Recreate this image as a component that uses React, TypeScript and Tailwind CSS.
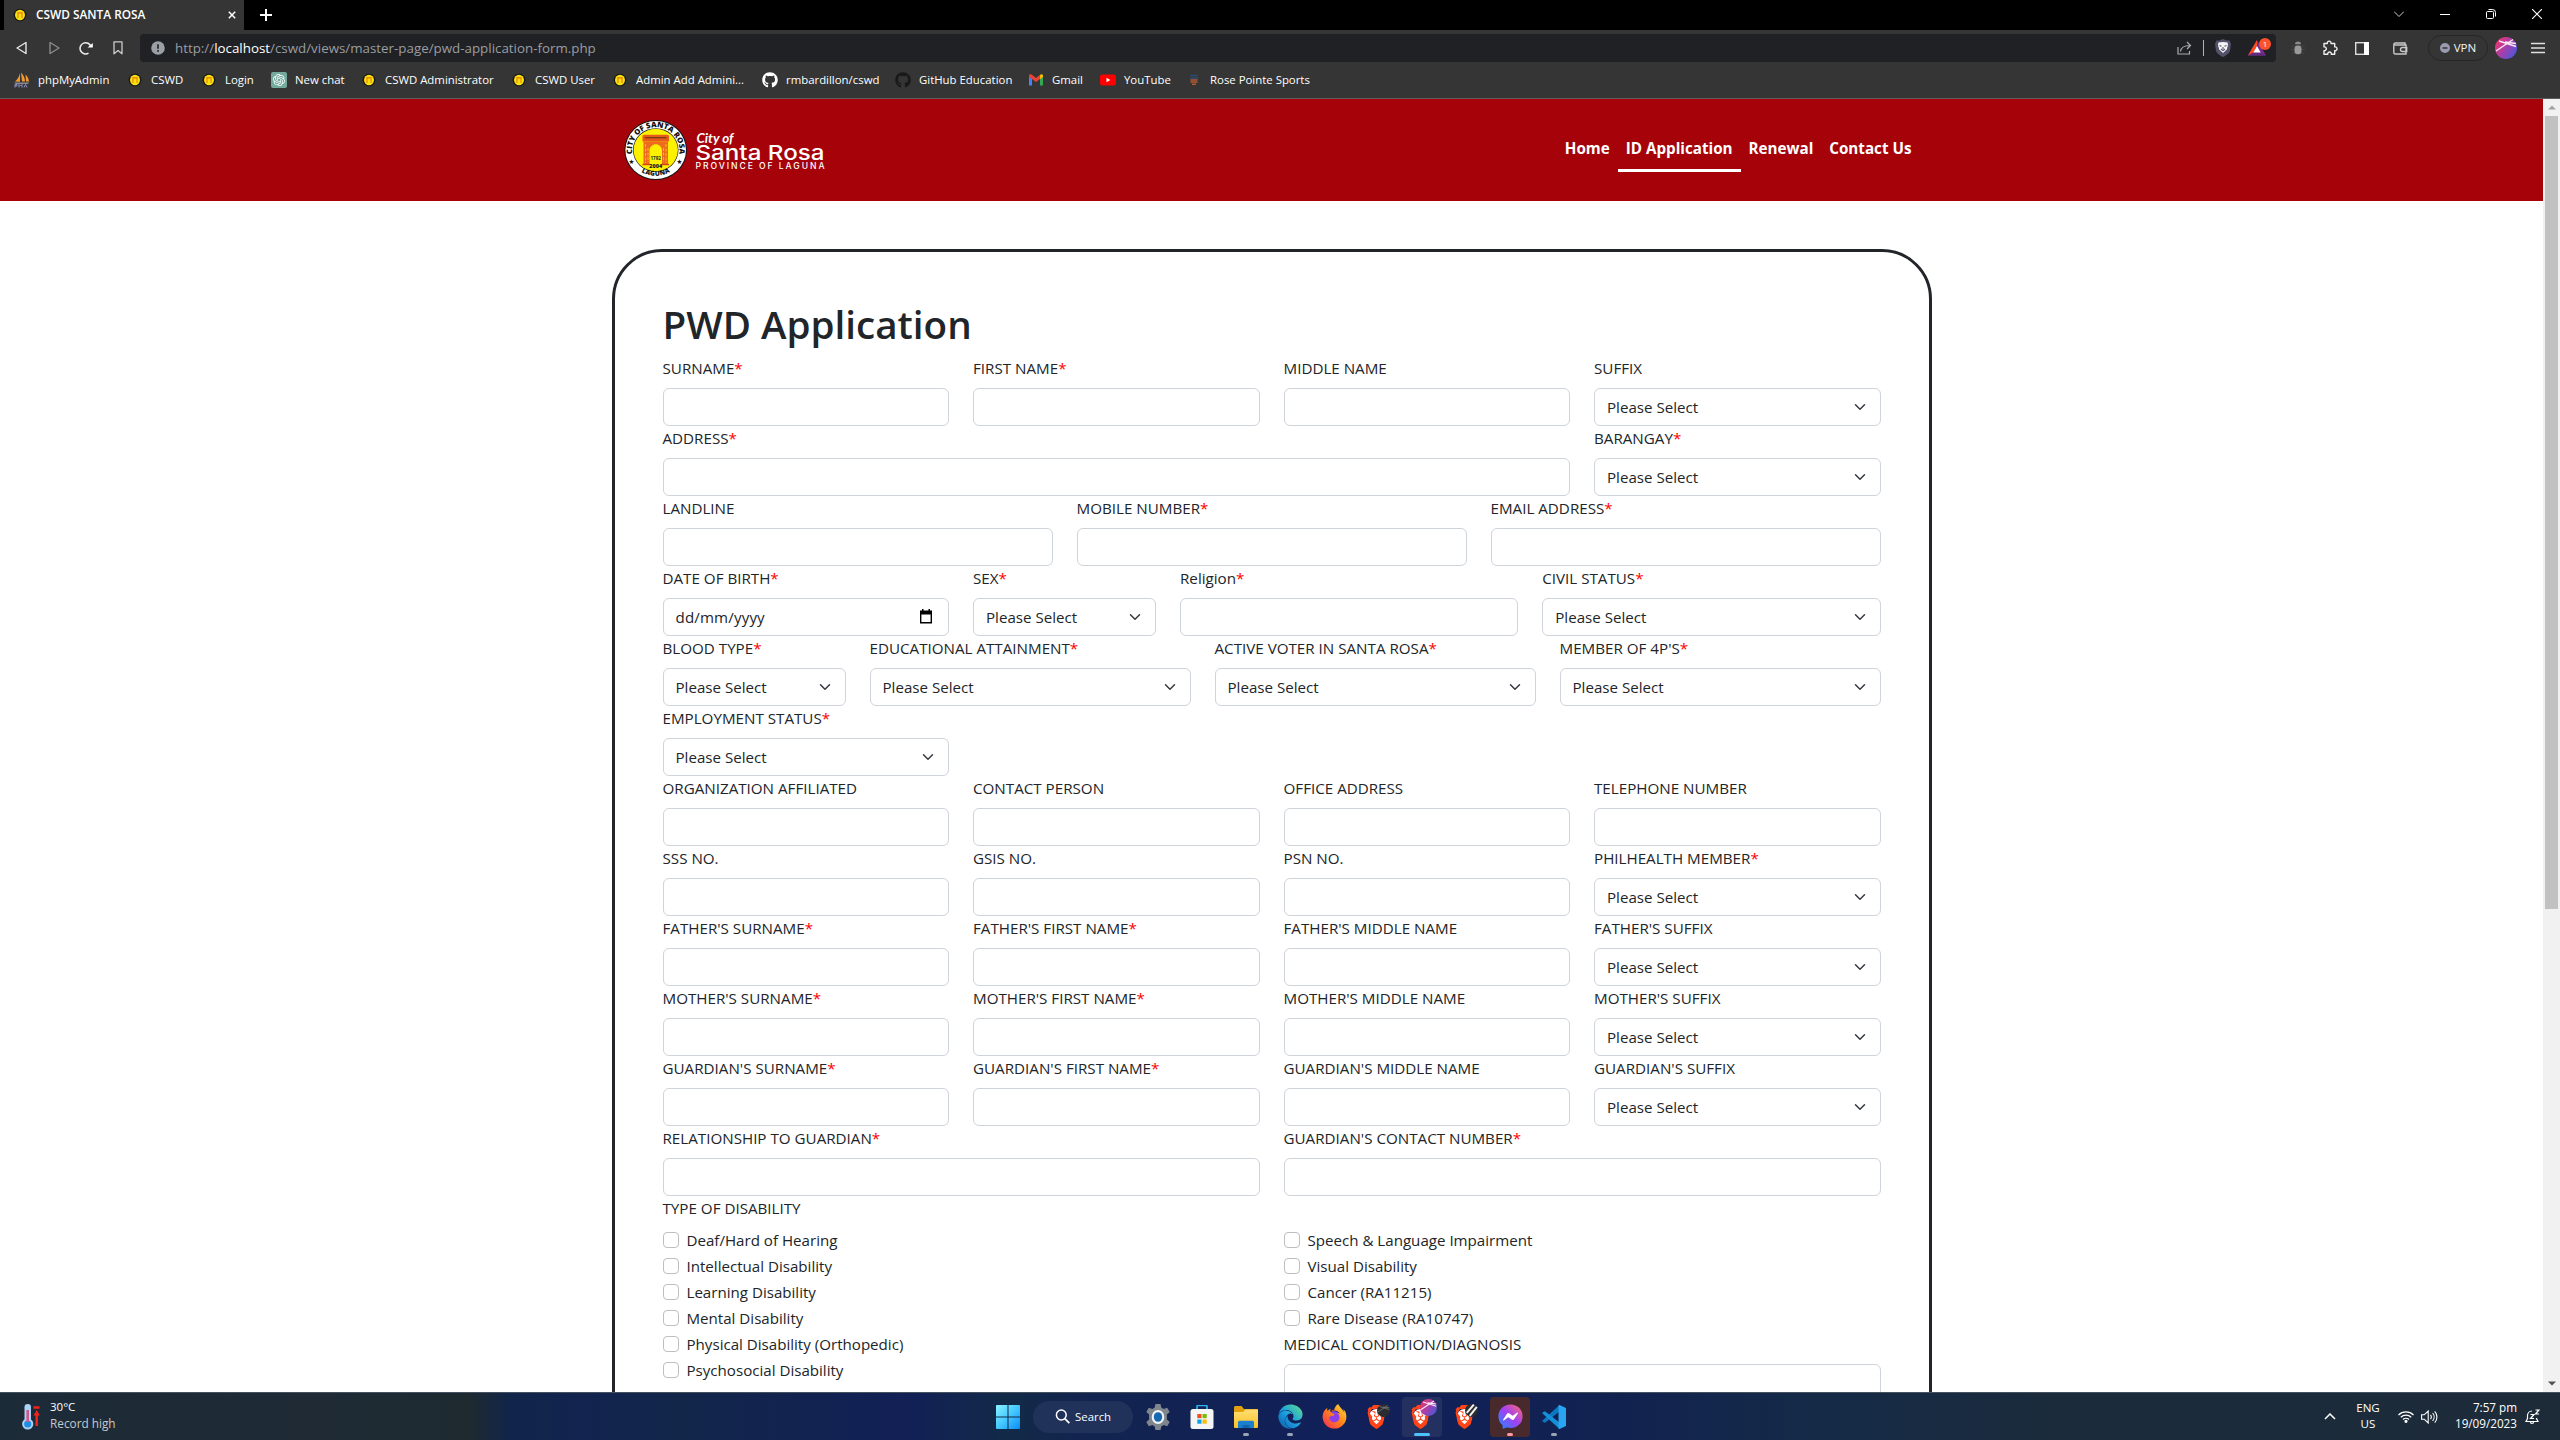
import React from 'react';
import { SiBrave, SiOpenai } from 'react-icons/si';
import { FaGithub, FaEdge, FaFirefoxBrowser, FaFacebookMessenger } from 'react-icons/fa';

function Gradients() {
  return (
    <svg width="0" height="0" className="absolute">
      <defs>
        <linearGradient id="win" x1="0" y1="0" x2="1" y2="1">
          <stop offset="0" stopColor="#8af3ff" />
          <stop offset="0.5" stopColor="#45c8ff" />
          <stop offset="1" stopColor="#0a8cf5" />
        </linearGradient>
        <linearGradient id="edge" x1="0" y1="1" x2="1" y2="0">
          <stop offset="0" stopColor="#0c59a4" />
          <stop offset="0.45" stopColor="#1b9de2" />
          <stop offset="1" stopColor="#5fe08a" />
        </linearGradient>
        <linearGradient id="fox" x1="1" y1="0" x2="0" y2="1">
          <stop offset="0" stopColor="#ffe14a" />
          <stop offset="0.45" stopColor="#ff8a16" />
          <stop offset="1" stopColor="#f5245e" />
        </linearGradient>
        <linearGradient id="msg" x1="0" y1="1" x2="1" y2="0">
          <stop offset="0" stopColor="#1a8cff" />
          <stop offset="0.5" stopColor="#a040f5" />
          <stop offset="1" stopColor="#ff6a6c" />
        </linearGradient>
        <linearGradient id="folder" x1="0" y1="0" x2="0" y2="1">
          <stop offset="0" stopColor="#ffdf72" />
          <stop offset="1" stopColor="#fcc02a" />
        </linearGradient>
        <linearGradient id="avatar" x1="0" y1="0.2" x2="1" y2="0.9">
          <stop offset="0" stopColor="#f0356a" />
          <stop offset="0.5" stopColor="#a040b0" />
          <stop offset="1" stopColor="#3a5ee0" />
        </linearGradient>
      </defs>
    </svg>
  );
}

/* ---------- Browser chrome ---------- */

function SealIcon() {
  return (
    <svg width="16" height="16" viewBox="0 0 16 16" className="shrink-0">
      <circle cx="8" cy="8" r="6.3" fill="#161616" />
      <ellipse cx="8" cy="8" rx="5" ry="5.3" fill="#f7e30c" />
      <path d="M5.3 5h5.4v6H9.4V7.6c0-1.4-2.8-1.4-2.8 0V11H5.3z" fill="#ef8a12" />
    </svg>
  );
}

function Avatar({ size, dark, light }: { size: number; dark?: boolean; light?: boolean }) {
  return (
    <svg width={size} height={size} viewBox="0 0 22 22" className="shrink-0">
      <circle cx="11" cy="11" r="11" fill={dark || light ? '#2a2c30' : 'url(#avatar)'} />
      {light ? (
        <path d="M3 15 15 1M8 20 20 5" stroke="#f0f0f0" strokeWidth="3.4" />
      ) : (
        <path d="M1 14 18 2.500M4 4l17 5.500M10 5l11 1.500" stroke={dark ? '#777' : '#fbe6f2'} strokeWidth="1.4" fill="none" />
      )}
    </svg>
  );
}

function TabStrip() {
  return (
    <div className="flex h-[30px] shrink-0 bg-black pl-1">
      <div className="flex w-60 items-center bg-[#353535] pl-2">
        <SealIcon />
        <span className="ml-2 grow text-[11.85px] font-semibold text-white">CSWD SANTA ROSA</span>
        <svg width="8" height="8" viewBox="0 0 8 8" className="mr-2">
          <path d="M.8.8l6.4 6.4M7.2.8.8 7.2" stroke="#fff" strokeWidth="1.5" />
        </svg>
      </div>
      <svg width="12" height="12" viewBox="0 0 12 12" className="mt-[9px] ml-4">
        <path d="M6 0v12M0 6h12" stroke="#fff" strokeWidth="2" />
      </svg>
      <div className="grow" />
      <div className="mr-[18px] flex h-7 items-center gap-9">
        <svg width="10" height="10" viewBox="0 0 10 10"><path d="M0 2.5l5 5 5-5" fill="none" stroke="#ccc" /></svg>
        <svg width="10" height="10" viewBox="0 0 10 10"><path d="M0 5.5h10" stroke="#fff" /></svg>
        <svg width="10" height="10" viewBox="0 0 10 10" fill="none" stroke="#fff">
          <rect x=".5" y="2.5" width="7" height="7" rx="1" />
          <path d="M2.5.5h4a3 3 0 0 1 3 3v4" />
        </svg>
        <svg width="10" height="10" viewBox="0 0 10 10"><path d="M0 0l10 10M10 0 0 10" stroke="#fff" strokeWidth="1.1" /></svg>
      </div>
    </div>
  );
}

function Toolbar() {
  return (
    <div className="flex h-9 shrink-0 items-center bg-[#353535]">
      <div className="flex w-[140px] items-center pl-4">
        <svg width="12" height="14" viewBox="0 0 12 14"><path d="M10 1.5v11L1 7z" fill="none" stroke="#e6e6e6" strokeWidth="1.4" strokeLinejoin="round" /></svg>
        <svg width="12" height="14" viewBox="0 0 12 14" className="ml-5"><path d="M2 1.5v11L11 7z" fill="none" stroke="#8a8a8a" strokeWidth="1.4" strokeLinejoin="round" /></svg>
        <svg width="14" height="14" viewBox="0 0 14 14" className="ml-[19px]">
          <path d="M9.500 12.200A5.600 5.600 0 1 1 12 5.600" fill="none" stroke="#eee" strokeWidth="1.500" />
          <path d="M8.600 6.600h5.200V2z" fill="#fff" />
        </svg>
        <svg width="10" height="14" viewBox="0 0 10 14" className="ml-5"><path d="M1 .8h8v12L5 9.500l-4 3.300z" fill="none" stroke="#ccc" strokeWidth="1.300" strokeLinejoin="round" /></svg>
      </div>
      <div className="flex h-7 w-[2136px] items-center rounded bg-[#202124] pl-[11px]">
        <svg width="14" height="14" viewBox="0 0 14 14">
          <circle cx="7" cy="7" r="6.8" fill="#9aa0a6" />
          <path d="M7 3.300v4.400M7 9v1.700" stroke="#202124" strokeWidth="1.600" />
        </svg>
        <span className="ml-[10px] text-[13.35px] text-[#9a9da1]">
          http://<span className="text-white">localhost</span>/cswd/views/master-page/pwd-application-form.php
        </span>
        <div className="grow" />
        <svg width="15" height="14" viewBox="0 0 15 14" fill="none" stroke="#a8abb0" strokeWidth="1.200">
          <path d="M1 6v7h11.500v-3" />
          <path d="M3.500 10.500C4 6.500 7 4.500 13 4.500M10 1l3.500 3.500L10 8" />
        </svg>
        <div className="ml-[11px] h-4 w-px bg-[#b5b5b5]" />
        <svg width="16" height="18" viewBox="0 0 16 18" className="ml-[11px]">
          <path d="M8 0l3.500 1.500 3 0L16 5l-1 7c-.5 2-4 4.500-7 6-3-1.500-6.500-4-7-6L0 5l1.500-3.500h3z" fill="#52536b" />
          <path d="M8 3l4.500.5L13 6l-1.200 4.500L8 14 4.200 10.500 3 6l.5-2.500z" fill="#f4f4f6" />
          <path d="M4.500 6.500l2 .7M11.500 6.500l-2 .7M8 8v2M6 10l2 1.500L10 10" stroke="#52536b" strokeWidth="1.100" fill="none" />
        </svg>
        <div className="relative mr-1 ml-[17px] h-7 w-6">
          <svg width="18" height="16" viewBox="0 0 18 16" className="absolute top-[6px] left-0">
            <path d="M9 0L0 15.500h18z" fill="#7a2a90" />
            <path d="M9 0L0 15.500l5.500-3L9 5.500z" fill="#ff4a1a" />
            <path d="M0 15.500h18l-5-3H5.500z" fill="#5f2a80" />
            <path d="M9 6l-3.700 6.500h7.400z" fill="#fff" />
          </svg>
          <span className="absolute top-1 left-[11px] flex h-3 w-3 items-center justify-center rounded-full bg-[#fb542b] text-[8px] leading-none text-white">1</span>
        </div>
      </div>
      <svg width="14" height="14" viewBox="0 0 14 14" className="ml-[15px]">
        <path d="M0 5h14M0 8.500h14M1 12h12" stroke="#454545" />
        <rect x="3.500" y="4.500" width="7" height="8.800" rx="3.200" fill="#999" />
        <path d="M4 3.200a3 2.700 0 0 1 6 0z" fill="#8a8a8a" />
      </svg>
      <svg width="16" height="16" viewBox="0 0 16 16" className="ml-[17px]">
        <path d="M2 3.500h3.300a1.900 1.900 0 1 1 3.700 0h3.700v3.400a1.900 1.900 0 1 1 0 3.700v3.600H9.300a1.800 1.800 0 1 0-3.500 0H2v-3.600a1.900 1.900 0 1 0 0-3.700z" fill="none" stroke="#eee" strokeWidth="1.400" strokeLinejoin="round" />
      </svg>
      <svg width="14" height="13" viewBox="0 0 14 13" className="ml-[17px]">
        <rect x=".7" y=".7" width="12.600" height="11.600" fill="none" stroke="#ddd" strokeWidth="1.400" />
        <path d="M9 0h5v13H9z" fill="#fff" />
      </svg>
      <svg width="15" height="13" viewBox="0 0 15 13" className="ml-6" fill="none" stroke="#c8c8c8" strokeWidth="1.400">
        <path d="M12 3V1H2.500C.5 1 .5 3 2.500 3H13v9H2.500C1.300 12 .8 11.500.8 10.500v-8" />
        <path d="M13.700 5.500H9.500a2 2 0 0 0 0 4h4.200z" />
      </svg>
      <div className="ml-5 flex h-[26px] w-[60px] items-center justify-center gap-1 rounded-full border border-[#262626]">
        <svg width="10" height="10" viewBox="0 0 10 10"><circle cx="5" cy="5" r="5" fill="#9a9bb0" /><path d="M2.500 5h5" stroke="#353535" strokeWidth="1.500" /></svg>
        <span className="text-[11.600px] text-[#f0f0f0]">VPN</span>
      </div>
      <div className="ml-[7px] flex"><Avatar size={22} /></div>
      <svg width="14" height="12" viewBox="0 0 14 12" className="ml-[14px]"><path d="M0 1.500h14M0 6h14M0 10.500h14" stroke="#e0e0e0" strokeWidth="1.400" /></svg>
    </div>
  );
}

function PhpMyAdminIcon() {
  return (
    <svg width="16" height="16" viewBox="0 0 16 16">
      <path d="M6 1C5.500 4 3.500 7.500 1 9.500l5 .2zM7 .5l1 9h3C11 6 9.500 3 7 .5zM11.500 2.500L12 9.500h3c-.2-3-1.500-5-3.500-7z" fill="#f29a2e" />
      <path d="M0 10.500h15l-1 1.500H2z" fill="#8a8a9a" />
      <path d="M1 15.500V12.500h2v1.500H1M5 15.500v-3l1.500 1.500L8 12.500v3M10 15.500l1.500-3 1.500 3" stroke="#8f92c0" fill="none" />
    </svg>
  );
}

function GmailIcon() {
  return (
    <svg width="16" height="16" viewBox="0 0 16 16">
      <path d="M1 4v9.500h3V7z" fill="#4285f4" />
      <path d="M15 4v9.500h-3V7z" fill="#34a853" />
      <path d="M1 3.500C1 2.200 2.700 1.800 3.600 2.600L8 6l4-3.200V7L8 10 4 7 1 4.800z" fill="#ea4335" />
      <path d="M12 2.900c1.200-1.200 3-.6 3 .8v1.200L12 7.200z" fill="#fbbc04" />
    </svg>
  );
}

const bookmarks: { label: string; width: string; icon: React.ReactNode }[] = [
  { label: 'phpMyAdmin', width: 'w-[113px]', icon: <PhpMyAdminIcon /> },
  { label: 'CSWD', width: 'w-[74px]', icon: <SealIcon /> },
  { label: 'Login', width: 'w-[70px]', icon: <SealIcon /> },
  {
    label: 'New chat', width: 'w-[90px]',
    icon: <span className="flex h-4 w-4 items-center justify-center rounded-xs bg-[#74aa9c] text-[12px] text-white"><SiOpenai /></span>,
  },
  { label: 'CSWD Administrator', width: 'w-[150px]', icon: <SealIcon /> },
  { label: 'CSWD User', width: 'w-[101px]', icon: <SealIcon /> },
  { label: 'Admin Add Admini...', width: 'w-[150px]', icon: <SealIcon /> },
  { label: 'rmbardillon/cswd', width: 'w-[133px]', icon: <FaGithub className="h-4 w-4 text-white" /> },
  { label: 'GitHub Education', width: 'w-[133px]', icon: <FaGithub className="h-4 w-4 text-[#191919]" /> },
  { label: 'Gmail', width: 'w-[72px]', icon: <GmailIcon /> },
  {
    label: 'YouTube', width: 'w-[86px]',
    icon: <svg width="16" height="16" viewBox="0 0 16 16"><rect y="2.500" width="16" height="11" rx="2.500" fill="#f00" /><path d="M6.500 5.800v4.400L10.300 8z" fill="#fff" /></svg>,
  },
  {
    label: 'Rose Pointe Sports', width: 'w-[140px]',
    icon: <svg width="16" height="16" viewBox="0 0 16 16"><path d="M4 3.500h8M4 6h8" stroke="#2c4a72" strokeWidth="1.500" /><path d="M4.500 8h7M4.500 10h7M6 12.300h4" stroke="#b05a30" strokeWidth="1.500" /></svg>,
  },
];

function BookmarksBar() {
  return (
    <div className="flex h-[33px] shrink-0 items-start border-b border-[#5c5c5c] bg-[#353535] pl-3.5">
      {bookmarks.map((b) => (
        <div key={b.label} className={`flex h-7 shrink-0 items-center ${b.width}`}>
          {b.icon}
          <span className="ml-2 text-[11.400px] whitespace-nowrap text-white">{b.label}</span>
        </div>
      ))}
    </div>
  );
}

/* ---------- Page ---------- */

function CityLogo() {
  return (
    <svg width="204" height="64" viewBox="0 0 204 64">
      <ellipse cx="31.700" cy="32" rx="31.300" ry="30" fill="#151515" />
      <ellipse cx="31.700" cy="32" rx="30.300" ry="29" fill="#fff" />
      <ellipse cx="31.700" cy="32" rx="22.800" ry="21.800" fill="#151515" />
      <ellipse cx="31.700" cy="32" rx="22.200" ry="21.200" fill="#fdf100" />
      <path id="sealTop" d="M8.300 36a23.700 23.200 0 1 1 46.800 0" fill="none" />
      <path id="sealBottom" d="M12.500 50.200a27.600 27 0 0 0 38.400 0" fill="none" />
      <text fontFamily="Open Sans, sans-serif" fontWeight="800" fontSize="7.600" fill="#111">
        <textPath href="#sealTop" textLength="81" startOffset="0">CITY OF SANTA ROSA</textPath>
      </text>
      <text fontFamily="Open Sans, sans-serif" fontWeight="800" fontSize="6.600" fill="#111" textAnchor="middle">
        <textPath href="#sealBottom" startOffset="50%" textLength="30">LAGUNA</textPath>
      </text>
      <text x="7.500" y="46" fontSize="6.500" textAnchor="middle" fontFamily="DejaVu Sans" fill="#111">★</text>
      <text x="55.500" y="46" fontSize="6.500" textAnchor="middle" fontFamily="DejaVu Sans" fill="#111">★</text>
      <path d="M18.500 17.500l2-.8h22.500l2 .8v6h-26.500z" fill="#e8591c" />
      <path d="M21 19.700h21.500" stroke="#6b3a10" strokeWidth="1.200" />
      <path d="M19.500 23.500h24.500V46h-6V33c0-9-12.500-9-12.500 0v13h-6z" fill="#ee6a1c" />
      <path d="M21.500 26v19M24 30v14M39.500 30v14M42 26v19" stroke="#f9d40a" strokeWidth=".8" strokeDasharray="3 1.500" />
      <path d="M18.500 46.500h7.500M37.500 46.500h7.500" stroke="#d8481c" strokeWidth="1.500" />
      <text x="31.700" y="41.500" fontSize="4.500" fontWeight="700" textAnchor="middle" fontFamily="Open Sans, sans-serif" fill="#222">1792</text>
      <text x="31.700" y="49.800" fontSize="5.500" fontWeight="800" textAnchor="middle" fontFamily="Open Sans, sans-serif" fill="#222">2004</text>
      <text x="72.500" y="24.500" fontSize="13" fontStyle="italic" fontWeight="700" fontFamily="Lato, sans-serif" fill="#fff" textLength="37" lengthAdjust="spacingAndGlyphs">City of</text>
      <text x="71.500" y="42" fontSize="20.500" fontWeight="500" fontFamily="Inter, sans-serif" fill="#fff" textLength="129" lengthAdjust="spacingAndGlyphs">Santa Rosa</text>
      <text x="71.500" y="51" fontSize="8.600" fontWeight="500" fontFamily="Inter, sans-serif" fill="#fff" textLength="129">PROVINCE OF LAGUNA</text>
    </svg>
  );
}

function SiteHeader() {
  return (
    <header className="flex h-[102px] shrink-0 justify-center bg-[#a50309]">
      <div className="flex w-[1320px] items-center justify-between pr-3 pl-3">
        <div className="-mt-px"><CityLogo /></div>
        <nav className="flex text-[15.200px] font-bold text-white">
          <a className="px-2 py-2 leading-6">Home</a>
          <a className="-mt-[3px] border-b-3 border-white px-2 pt-[11px] pb-[9px] leading-6">ID Application</a>
          <a className="px-2 py-2 leading-6">Renewal</a>
          <a className="px-2 py-2 leading-6">Contact Us</a>
        </nav>
      </div>
    </header>
  );
}

type Kind = 'text' | 'select' | 'date';
type FieldDef = { label: string; span: string; kind?: Kind; req?: boolean };

const s2 = 'w-[207px]';
const s3 = 'w-[310.5px]';
const auto = 'flex-1';
const s6 = 'w-[621px]';

const rows: FieldDef[][] = [
  [
    { label: 'SURNAME', span: s3, req: true },
    { label: 'FIRST NAME', span: s3, req: true },
    { label: 'MIDDLE NAME', span: s3 },
    { label: 'SUFFIX', span: s3, kind: 'select' },
  ],
  [
    { label: 'ADDRESS', span: auto, req: true },
    { label: 'BARANGAY', span: s3, kind: 'select', req: true },
  ],
  [
    { label: 'LANDLINE', span: auto },
    { label: 'MOBILE NUMBER', span: auto, req: true },
    { label: 'EMAIL ADDRESS', span: auto, req: true },
  ],
  [
    { label: 'DATE OF BIRTH', span: s3, kind: 'date', req: true },
    { label: 'SEX', span: s2, kind: 'select', req: true },
    { label: 'Religion', span: auto, req: true },
    { label: 'CIVIL STATUS', span: auto, kind: 'select', req: true },
  ],
  [
    { label: 'BLOOD TYPE', span: s2, kind: 'select', req: true },
    { label: 'EDUCATIONAL ATTAINMENT', span: auto, kind: 'select', req: true },
    { label: 'ACTIVE VOTER IN SANTA ROSA', span: auto, kind: 'select', req: true },
    { label: "MEMBER OF 4P'S", span: auto, kind: 'select', req: true },
  ],
  [{ label: 'EMPLOYMENT STATUS', span: s3, kind: 'select', req: true }],
  [
    { label: 'ORGANIZATION AFFILIATED', span: s3 },
    { label: 'CONTACT PERSON', span: s3 },
    { label: 'OFFICE ADDRESS', span: s3 },
    { label: 'TELEPHONE NUMBER', span: s3 },
  ],
  [
    { label: 'SSS NO.', span: s3 },
    { label: 'GSIS NO.', span: s3 },
    { label: 'PSN NO.', span: s3 },
    { label: 'PHILHEALTH MEMBER', span: s3, kind: 'select', req: true },
  ],
  ...['FATHER', 'MOTHER', 'GUARDIAN'].map((who): FieldDef[] => [
    { label: `${who}'S SURNAME`, span: s3, req: true },
    { label: `${who}'S FIRST NAME`, span: s3, req: true },
    { label: `${who}'S MIDDLE NAME`, span: s3 },
    { label: `${who}'S SUFFIX`, span: s3, kind: 'select' },
  ]),
  [
    { label: 'RELATIONSHIP TO GUARDIAN', span: s6, req: true },
    { label: "GUARDIAN'S CONTACT NUMBER", span: s6, req: true },
  ],
];

function Control({ kind }: { kind?: Kind }) {
  return (
    <div className="flex h-[38px] items-center justify-between rounded-md border border-[#ced4da] bg-white px-3">
      {kind === 'select' && (
        <>
          <span>Please Select</span>
          <svg width="16" height="12" viewBox="0 0 16 16" className="-mt-px">
            <path d="m2 5 6 6 6-6" fill="none" stroke="#343a40" strokeWidth="2" strokeLinecap="round" strokeLinejoin="round" />
          </svg>
        </>
      )}
      {kind === 'date' && (
        <>
          <span className="tracking-[0.15px]">dd/mm/yyyy</span>
          <svg width="14" height="15" viewBox="0 0 14 15" className="-mt-0.5 mr-[3px]">
            <path d="M1 1.500h2V0h1.500v1.500h5V0H11v1.500h2V14.500H1zM2.400 5.500v7.600h9.200V5.500z" fill="#000" fillRule="evenodd" />
          </svg>
        </>
      )}
    </div>
  );
}

function Label({ children }: { children: React.ReactNode }) {
  return <div className="mb-2 h-6 text-[15.180px] leading-6 whitespace-nowrap">{children}</div>;
}

function Field({ label, span, kind, req }: FieldDef) {
  return (
    <div className={`px-3 ${span}`}>
      <Label>
        {label}
        {req && <span className="text-[#f00]">*</span>}
      </Label>
      <Control kind={kind} />
    </div>
  );
}

function Check({ label }: { label: string }) {
  return (
    <div className="mb-0.5 flex h-6 items-center">
      <span className="h-4 w-4 rounded-sm border border-[#bfbfbf]" />
      <span className="ml-2">{label}</span>
    </div>
  );
}

function ApplicationForm() {
  return (
    <div className="mx-auto mt-12 h-[1600px] w-[1320px] shrink-0 rounded-[50px] border-3 border-[#212529] bg-white p-12 text-[15.120px] text-[#212529]">
      <h1 className="mb-2 h-12 text-[38.600px] leading-[48px] font-semibold">PWD Application</h1>
      {rows.map((row, i) => (
        <div key={i} className="-mx-3 flex">
          {row.map((f) => (
            <Field key={f.label} {...f} />
          ))}
        </div>
      ))}
      <Label>TYPE OF DISABILITY</Label>
      <div className="-mx-3 flex">
        <div className="w-[621px] px-3">
          <Check label="Deaf/Hard of Hearing" />
          <Check label="Intellectual Disability" />
          <Check label="Learning Disability" />
          <Check label="Mental Disability" />
          <Check label="Physical Disability (Orthopedic)" />
          <Check label="Psychosocial Disability" />
        </div>
        <div className="w-[621px] px-3">
          <Check label="Speech & Language Impairment" />
          <Check label="Visual Disability" />
          <Check label="Cancer (RA11215)" />
          <Check label="Rare Disease (RA10747)" />
          <Label>MEDICAL CONDITION/DIAGNOSIS</Label>
          <div className="h-[86px] rounded-md border border-[#ced4da]" />
        </div>
      </div>
    </div>
  );
}

function Scrollbar() {
  return (
    <div className="flex w-[17px] shrink-0 flex-col items-center bg-[#f1f1f1]">
      <div className="flex h-[17px] items-center"><svg width="8" height="5" viewBox="0 0 8 5"><path d="M0 4.500 4 .5l4 4z" fill="#a3a3a3" /></svg></div>
      <div className="h-[793px] w-[13px] bg-[#c1c1c1]" />
      <div className="grow" />
      <div className="flex h-[17px] items-center"><svg width="8" height="5" viewBox="0 0 8 5"><path d="M0 .5l4 4 4-4z" fill="#505050" /></svg></div>
    </div>
  );
}

/* ---------- Taskbar ---------- */

function Slot({ children, dot, className = '' }: { children: React.ReactNode; dot?: string; className?: string }) {
  return (
    <div className={`relative mx-0.5 flex h-10 w-10 items-center justify-center rounded ${className}`}>
      {children}
      {dot && <span className={`absolute bottom-px h-[3px] rounded-full ${dot}`} />}
    </div>
  );
}

function BraveIcon({ badge }: { badge: React.ReactNode }) {
  return (
    <div className="relative flex h-6 w-6 items-center">
      <span className="absolute top-1 left-[3px] h-4 w-[15px] rounded-full bg-white" />
      <SiBrave className="relative h-6 w-[21px] text-[#ff4418]" preserveAspectRatio="none" />
      {badge}
    </div>
  );
}

function Taskbar() {
  return (
    <footer className="flex h-12 shrink-0 items-center border-t border-[#46525f] bg-[linear-gradient(90deg,#1c2b38_0px,#1f2a35_300px,#1e2a30_470px,#11254a_510px,#12244f_580px,#12264a_680px,#122056_910px,#122a47_1010px,#12244f_1080px,#11205a_1350px,#122250_1620px,#142a48_1800px,#1b2b3c_2050px,#1d2b39_2560px)] text-white">
      <div className="flex w-[988px] items-center pl-[21px]">
        <svg width="20" height="26" viewBox="0 0 20 26">
          <rect x="3.500" y="0" width="6.500" height="20" rx="3.200" fill="#a9d4f5" />
          <circle cx="6.700" cy="20" r="5.600" fill="#a9d4f5" />
          <circle cx="6.700" cy="20" r="3.600" fill="#1f8fe6" />
          <rect x="5.400" y="6" width="2.600" height="12" fill="#d2588a" />
          <path d="M12.500 3.500h6M15.700 22V10" stroke="#f5221a" strokeWidth="2.400" />
          <path d="M15.700 6l3.200 5.500h-6.400z" fill="#f5221a" />
        </svg>
        <div className="-mt-[3px] ml-[9px] text-[11.500px] leading-4">
          <div>30°C</div>
          <div className="text-[11.800px] text-[#c5cad0]">Record high</div>
        </div>
      </div>
      <div className="flex w-10 items-center justify-center">
        <svg width="24" height="24" viewBox="0 0 24 24"><path d="M0 1a1 1 0 0 1 1-1h10.500v11.500H0zM12.500 0H23a1 1 0 0 1 1 1v10.500H12.500zM0 12.500h11.500V24H1a1 1 0 0 1-1-1zM12.500 12.500H24V23a1 1 0 0 1-1 1H12.500z" fill="url(#win)" /></svg>
      </div>
      <div className="ml-[5px] flex h-8 w-[100px] items-center rounded-full bg-[#20315a] pl-[22px]">
        <svg width="15" height="15" viewBox="0 0 15 15"><circle cx="6.300" cy="6" r="4.900" fill="none" stroke="#fff" strokeWidth="1.500" /><path d="M9.800 9.700l4.500 4.500" stroke="#fff" strokeWidth="1.800" /></svg>
        <span className="ml-[5px] text-[11.400px]">Search</span>
      </div>
      <div className="ml-[3px] flex">
        <Slot>
          <svg width="24" height="26" viewBox="0 0 24 26">
            <path d="M9.500 0h5l.8 3.600 2.300 1.300L21.200 3.800 23.700 8l-2.800 2.600v4.800l2.800 2.600-2.500 4.200-3.600-1.100-2.300 1.300-.8 3.600h-5l-.8-3.600-2.300-1.300-3.600 1.100L.3 18l2.800-2.600v-4.800L.3 8l2.500-4.200 3.600 1.100 2.300-1.300z" fill="#80868e" />
            <ellipse cx="12" cy="13" rx="6.300" ry="7" fill="#f2f4f6" />
            <ellipse cx="12" cy="13" rx="4.200" ry="4.800" fill="#1668b0" />
          </svg>
        </Slot>
        <Slot>
          <svg width="24" height="24" viewBox="0 0 24 24">
            <path d="M7 6V1.500C7 .8 7.500.3 8.200.3h7.600c.7 0 1.200.5 1.200 1.200V6" fill="none" stroke="#2bb4f0" strokeWidth="1.700" />
            <rect x="0.500" y="4" width="23" height="20" rx="2.500" fill="#f5f5f5" />
            <path d="M7.300 9h4.200v4.200H7.300z" fill="#f25022" /><path d="M12.500 9h4.200v4.200h-4.200z" fill="#7fba00" />
            <path d="M7.300 14.500h4.200v4.200H7.300z" fill="#00a4ef" /><path d="M12.500 14.500h4.200v4.200h-4.200z" fill="#ffb900" />
          </svg>
        </Slot>
        <Slot dot="w-1.5 bg-[#9aa3b5]">
          <svg width="24" height="22" viewBox="0 0 24 22">
            <path d="M0 1.500C0 .7.7 0 1.500 0h6l2.500 3H24v4H0z" fill="#e0a010" />
            <path d="M0 6h9l2.500-2.500H23a1 1 0 0 1 1 1V21a1 1 0 0 1-1 1H1a1 1 0 0 1-1-1z" fill="url(#folder)" />
            <path d="M4 22v-5.500c0-1 .7-1.700 1.700-1.700h12.600c1 0 1.700.7 1.700 1.700V22z" fill="#1a7fcd" />
            <path d="M8.500 22v-3h7v3z" fill="#1464ac" />
          </svg>
        </Slot>
        <Slot dot="w-1.5 bg-[#9aa3b5]"><FaEdge size={25} fill="url(#edge)" /></Slot>
        <Slot>
          <span className="relative flex"><span className="absolute top-[7px] left-[6px] h-3 w-3 rounded-full bg-[#8a3fe8]" /><FaFirefoxBrowser size={25} fill="url(#fox)" className="relative" /></span>
        </Slot>
        <Slot><BraveIcon badge={<span className="absolute -top-px left-[11px]"><Avatar size={13} dark /></span>} /></Slot>
        <Slot className="bg-[#24305f]" dot="w-4 bg-[#4cc2ff]"><BraveIcon badge={<span className="absolute -top-[6px] left-[10px]"><Avatar size={17} /></span>} /></Slot>
        <Slot><BraveIcon badge={<span className="absolute -top-px left-[11px]"><Avatar size={13} light /></span>} /></Slot>
        <Slot className="bg-[#48292c]" dot="w-1.5 bg-[#ff9aa0]">
          <span className="relative flex"><span className="absolute top-[6px] left-[4px] h-3 w-4 bg-white" /><FaFacebookMessenger size={25} fill="url(#msg)" className="relative" /></span>
        </Slot>
        <Slot dot="w-1.5 bg-[#9aa3b5]">
          <svg width="24" height="24" viewBox="0 0 24 24">
            <path d="M17.500 0v6.500L3 17.800.8 16.700a.9.900 0 0 1 0-1.400z" fill="#0b78c2" />
            <path d="M17.500 24v-6.500L3 6.200.8 7.300a.9.900 0 0 0 0 1.400z" fill="#1590d8" />
            <path d="M17.500 0L24 3v18l-6.500 3c-.6 0-1-.4-1-1V1c0-.6.4-1 1-1z" fill="#2aa4f0" />
          </svg>
        </Slot>
      </div>
      <div className="grow" />
      <svg width="12" height="7" viewBox="0 0 12 7"><path d="M1 6l5-5 5 5" fill="none" stroke="#fff" strokeWidth="1.500" /></svg>
      <div className="-mt-px ml-5 w-6 text-center text-[11.600px] leading-4"><div>ENG</div><div>US</div></div>
      <svg width="16" height="13" viewBox="0 0 16 13" className="ml-[18px]" fill="none" stroke="#fff" strokeWidth="1.200">
        <path d="M.5 5a10.600 10.600 0 0 1 15 0M2.800 7.300a7.400 7.400 0 0 1 10.400 0M5 9.500a4.300 4.300 0 0 1 6 0" />
        <circle cx="8" cy="11.300" r="1" fill="#fff" />
      </svg>
      <svg width="17" height="14" viewBox="0 0 17 14" className="ml-[7px]" fill="none" stroke="#fff" strokeWidth="1.100">
        <path d="M.6 4.800v4.400h2.600l4 3.800V1l-4 3.800zM9.500 4.800c1 1.300 1 3.100 0 4.400M11.600 3c2 2.300 2 5.700 0 8M13.700 1.300c3 3.300 3 8.100 0 11.400" />
      </svg>
      <div className="-mt-[3px] ml-4 w-[63px] text-right text-[11.700px] leading-4 whitespace-nowrap"><div>7:57 pm</div><div>19/09/2023</div></div>
      <svg width="15" height="16" viewBox="0 0 15 16" className="mr-[20px] ml-2" fill="none" stroke="#fff" strokeWidth="1.200">
        <path d="M7 2a4.600 4.600 0 0 0-4.500 4.600v3L1 12.500h12l-1.500-3V9M5.300 13.200c.3 1.600 3.100 1.600 3.400 0" />
        <path d="M5.500 5.500H9l-3.500 4H9M10.500 1H14l-3.500 4H14" />
      </svg>
    </footer>
  );
}

export default function App() {
  return (
    <div className="flex h-[1440px] w-[2560px] flex-col overflow-hidden bg-white font-['Open_Sans',sans-serif]">
      <Gradients />
      <TabStrip />
      <Toolbar />
      <BookmarksBar />
      <div className="flex h-0 grow">
        <main className="flex min-h-0 grow flex-col overflow-hidden">
          <SiteHeader />
          <ApplicationForm />
        </main>
        <Scrollbar />
      </div>
      <Taskbar />
    </div>
  );
}
